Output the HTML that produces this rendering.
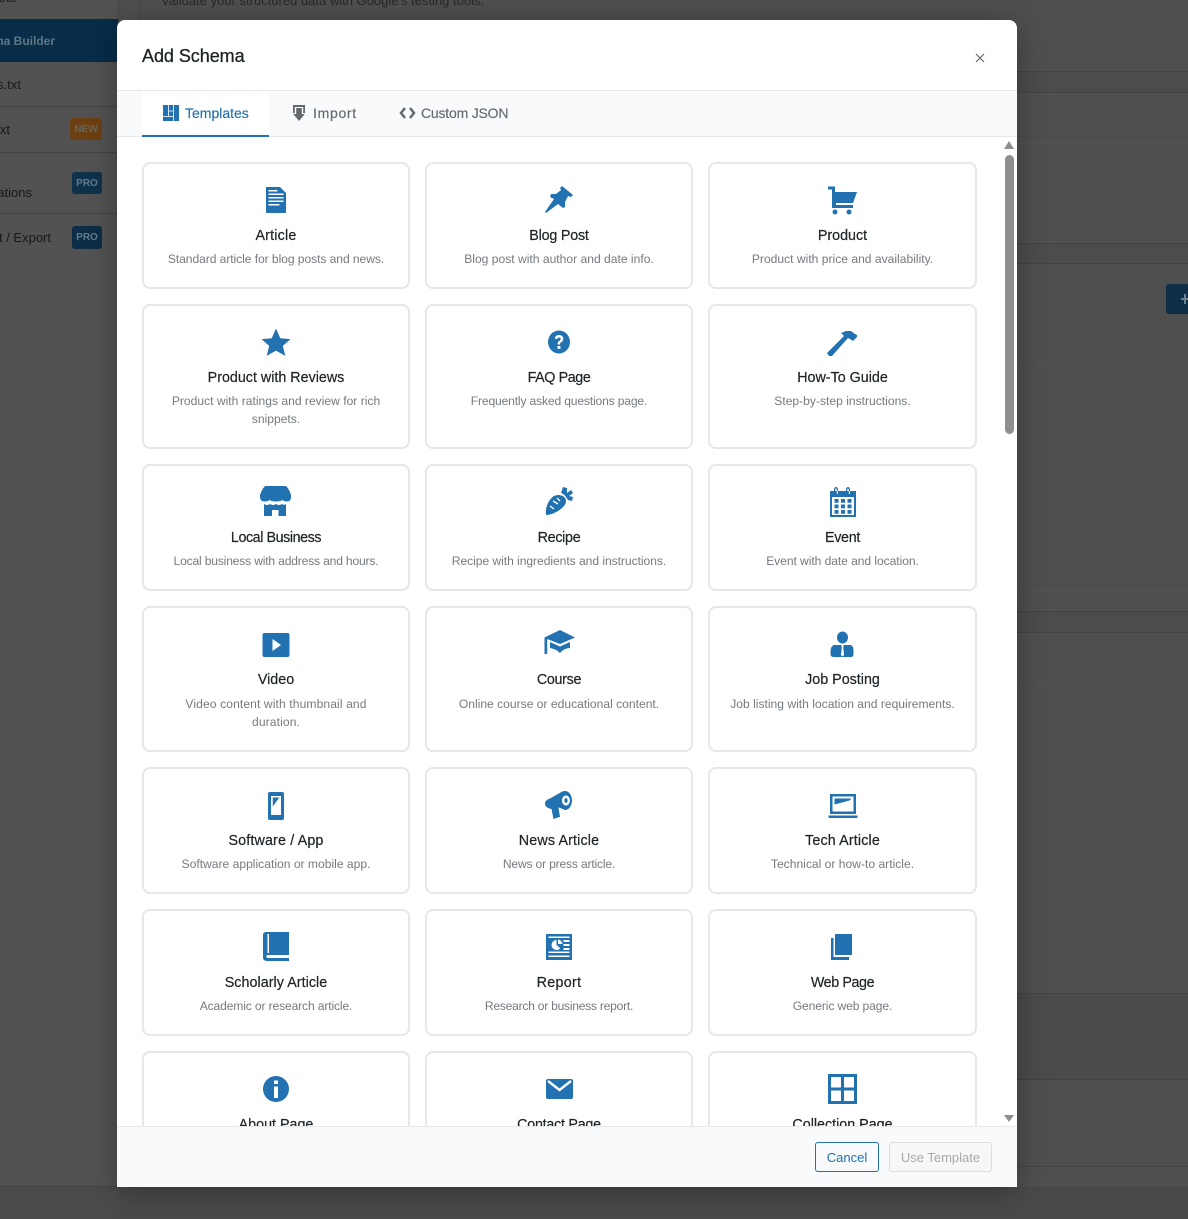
<!DOCTYPE html>
<html lang="en"><head><meta charset="utf-8"><title>Add Schema</title>
<style>
html,body{margin:0;padding:0;width:1188px;height:1219px;overflow:hidden;background:#5c5c5c;font-family:"Liberation Sans",sans-serif}
.a{position:absolute}
#bg{left:0;top:0;width:1188px;height:1219px;background:#666;overflow:hidden}
.l{position:absolute;height:1px;background:#565656}
.st{position:absolute;color:#202020;font-size:13px;white-space:nowrap;line-height:16px;right:1167px}
.bd{position:absolute;border-radius:3px;font-size:10px;font-weight:bold;text-align:center;line-height:23px}
#modal{left:117px;top:20px;width:900px;height:1167px;background:#fff;border-radius:8px 8px 0 0;box-shadow:0 4px 30px rgba(0,0,0,.3);overflow:hidden}
#title{left:25px;top:25px;font-size:18px;line-height:22px;color:#1d2327;-webkit-text-stroke:.3px #1d2327;white-space:nowrap;letter-spacing:-.05px}
#tabs{left:0;top:70px;width:900px;height:45px;background:#f8fafb;border-top:1px solid #e6e8ea;border-bottom:1px solid #e6e8ea}
#tab1{left:25px;top:0;width:127px;height:46px;background:#fff;box-sizing:border-box;border-bottom:2px solid #2271b1}
.tt{position:absolute;font-size:14px;line-height:18px;white-space:nowrap;color:#646970;top:13px;-webkit-text-stroke:.15px currentColor}
#body{left:0;top:117px;width:900px;height:989px;overflow:hidden}
.c{position:absolute;box-sizing:border-box;background:#fff;border:2px solid #e5e7ea;border-radius:8px;text-align:center}
.c svg{position:absolute;left:50%;margin-left:-16px;top:20px;width:32px;height:32px;fill:#2271b1}
.c b{position:absolute;left:0;right:0;top:63px;font-weight:normal;font-size:14.3px;line-height:18px;color:#1d2327;-webkit-text-stroke:.2px #1d2327}
.c p{position:absolute;left:20px;right:20px;top:86px;margin:0;font-size:12.1px;line-height:18px;color:#757a80}
#foot{left:0;top:1106px;width:900px;height:61px;background:#f8fafb;border-top:1px solid #e6e8ea}
.btn{position:absolute;top:15px;height:30px;box-sizing:border-box;border-radius:3px;font-size:13px;line-height:30px;text-align:center}
</style></head><body>
<div id="bg" class="a">
<div class="a" style="left:0;top:0;width:118px;height:1187px;background:#6a6a6a"></div>
<div class="a" style="left:118px;top:0;width:1px;height:1187px;background:#5a5a5a"></div>
<div class="a" style="left:0;top:1186px;width:118px;height:1px;background:#555"></div>
<div class="a" style="left:0;top:19px;width:118px;height:43px;background:#093a5e"></div>
<div class="st" style="right:1133px;top:33px;color:#7c98ab;font-weight:bold;font-size:12px">Schema Builder</div>
<div class="st" style="right:1172px;top:-10px;color:#222">Widgets</div>
<div class="st" style="top:77px">llms.txt</div>
<div class="st" style="right:1178px;top:122px">ads.txt</div>
<div class="st" style="right:1156px;top:185px">Integrations</div>
<div class="st" style="right:1137px;top:230px">Import / Export</div>
<div class="l" style="left:0;top:106px;width:118px"></div>
<div class="l" style="left:0;top:152px;width:118px"></div>
<div class="l" style="left:0;top:213px;width:118px"></div>
<div class="bd" style="left:70px;top:118px;width:32px;height:22px;background:#8a5218;color:#8a8074">NEW</div>
<div class="bd" style="left:72px;top:172px;width:30px;height:22px;background:#12405f;color:#7f9db4">PRO</div>
<div class="bd" style="left:72px;top:226px;width:30px;height:23px;background:#0f3a5a;color:#7f9db4">PRO</div>
<div class="a" style="left:139px;top:0;width:1px;height:20px;background:#5a5a5a"></div>
<div class="st" style="left:161px;right:auto;top:-7px;color:#333;font-size:13px">Validate your structured data with Google's testing tools.</div>
<div class="l" style="left:1017px;top:71px;width:171px"></div>
<div class="l" style="left:1017px;top:92px;width:171px"></div>
<div class="a" style="left:1017px;top:72px;width:171px;height:20px;background:#626262"></div>
<div class="a" style="left:1017px;top:143px;width:171px;height:1px;background:#6c6c6c"></div>
<div class="a" style="left:1017px;top:244px;width:171px;height:19px;background:#626262"></div>
<div class="l" style="left:1017px;top:243px;width:171px"></div>
<div class="l" style="left:1017px;top:263px;width:171px"></div>
<div class="a" style="left:1017px;top:364px;width:171px;height:1px;background:#6c6c6c"></div>
<div class="a" style="left:1166px;top:284px;width:30px;height:30px;background:#123a5a;border-radius:3px"></div>
<div class="a" style="left:1181px;top:298px;width:7px;height:2px;background:#8da3b5"></div>
<div class="a" style="left:1184px;top:294px;width:2px;height:10px;background:#8da3b5"></div>
<div class="a" style="left:1017px;top:590px;width:171px;height:1px;background:#6c6c6c"></div>
<div class="a" style="left:1017px;top:612px;width:171px;height:20px;background:#626262"></div>
<div class="l" style="left:1017px;top:611px;width:171px"></div>
<div class="l" style="left:1017px;top:632px;width:171px"></div>
<div class="a" style="left:1017px;top:683px;width:171px;height:1px;background:#6c6c6c"></div>
<div class="a" style="left:1017px;top:994px;width:171px;height:85px;background:#606060"></div>
<div class="l" style="left:1017px;top:993px;width:171px"></div>
<div class="l" style="left:1017px;top:1079px;width:171px"></div>
<div class="l" style="left:1017px;top:1166px;width:171px"></div>
<div class="a" style="left:119px;top:1187px;width:1069px;height:32px;background:#5e5e5e"></div>
<div class="a" style="left:0;top:1187px;width:119px;height:32px;background:#606060"></div>
<div class="a" style="left:0;top:0;width:1188px;height:1219px;background:rgba(0,0,0,.22)"></div>
</div>

<div id="modal" class="a">
<div id="title" class="a">Add Schema</div>
<svg class="a" style="left:858px;top:33px" width="10" height="10" viewBox="0 0 10 10"><path d="M1 1l8 8M9 1l-8 8" stroke="#646970" stroke-width="1.2" fill="none"/></svg>
<div id="tabs" class="a">
<div id="tab1" class="a"></div>
<svg class="a" style="left:46px;top:14px" width="16" height="16" viewBox="0 0 16 16"><rect width="16" height="16" fill="#2271b1"/><path d="M5.500 0v11M10.500 0v16M5.500 6h5M0 11.500h10.500" stroke="#fff" stroke-width=".8" fill="none"/></svg>
<div class="tt" style="left:68px;color:#2271b1">Templates</div>
<svg class="a" style="left:175px;top:13px" width="14" height="18" viewBox="0 0 14 18" fill="#646970"><path d="M1 1h12v8h-1.800V3H2.800v6H1zM4.200 4h5.600v6h3L7 17 1.200 10h3z"/></svg>
<div class="tt" style="left:196px;letter-spacing:.7px">Import</div>
<svg class="a" style="left:282px;top:15px" width="17" height="14" viewBox="0 0 17 14" fill="none" stroke="#646970" stroke-width="2.500"><path d="M6 2L2 7l4 5M11 2l4 5-4 5"/></svg>
<div class="tt" style="left:304px;letter-spacing:-.2px">Custom JSON</div>
</div>

<div id="body" class="a">

<div class="c" style="left:25px;top:25px;width:268px;height:127px"><svg viewBox="0 0 32 32"><path transform="translate(0,2)" fill-rule="evenodd" d="M6 1h14l6 6v20H6zM8.500 4v1.500h9V4zM8.500 7.500V9h15V7.500zM8.500 11v1.500h15V11zM8.500 14.500V16h15v-1.500zM8.500 18v1.500h11V18z"/></svg><b style="letter-spacing:.2px">Article</b><p style="letter-spacing:-.07px">Standard article for blog posts and news.</p></div>

<div class="c" style="left:308px;top:25px;width:268px;height:127px"><svg viewBox="0 0 32 32"><path d="M17 4l2-2 11 9-2 2-3-1-3 6v5l-2 1-5-4-12 9-1-1 9-13-4-2 1-3h5l5-4z"/></svg><b style="letter-spacing:-.2px">Blog Post</b><p>Blog post with author and date info.</p></div>

<div class="c" style="left:591px;top:25px;width:269px;height:127px"><svg viewBox="0 0 32 32"><path d="M1 2.500H8V8H30L26 19H9V21H26V24H5V5.500H1z"/><circle cx="8" cy="28" r="2.500"/><circle cx="22" cy="28" r="2.500"/></svg><b>Product</b><p>Product with price and availability.</p></div>

<div class="c" style="left:25px;top:167px;width:268px;height:145px"><svg viewBox="0 0 32 32"><path d="M16 2.500l4.300 9.700 10.200.9-7.700 6.800 2.500 10-9.300-5.300-9.300 5.300 2.500-10-7.700-6.800 10.200-.9z"/></svg><b>Product with Reviews</b><p>Product with ratings and review for rich snippets.</p></div>

<div class="c" style="left:308px;top:167px;width:268px;height:145px"><svg viewBox="0 0 32 32"><path fill-rule="evenodd" d="M16 4.500a11 11.500 0 1 1 0 23 11 11.500 0 0 1 0-23zM11.800 12.500l2.300.6c.3-1 1-1.500 1.900-1.500 1 0 1.700.6 1.700 1.400 0 .8-.5 1.200-1.300 1.800-1.300.9-1.800 1.800-1.800 3.200v.5h2.500v-.4c0-.9.300-1.300 1.100-1.900 1.300-.9 2.100-1.800 2.100-3.500 0-2.200-1.900-3.700-4.300-3.700-2.100 0-3.700 1.100-4.200 2.900zM14.500 20v2.800h2.900V20z"/></svg><b style="letter-spacing:-.4px">FAQ Page</b><p style="letter-spacing:-.16px">Frequently asked questions page.</p></div>

<div class="c" style="left:591px;top:167px;width:269px;height:145px"><svg viewBox="0 0 32 32"><path d="M0 27L17 10 14 7 19 5H24L28 8 30 9V11L26 15 23 13 21 12 5 30H2z"/></svg><b>How-To Guide</b><p>Step-by-step instructions.</p></div>

<div class="c" style="left:25px;top:327px;width:268px;height:127px"><svg viewBox="0 0 32 32"><path d="M5 0H26Q29 3 31 9V11Q31 15.500 27 15.500 24 15.500 22.500 14 20 15.500 16 15.500 12 15.500 9.500 14 8 15.500 5 15.500 0 15.500 0 11V9Q2 3 5 0z"/><path d="M4 18Q7 20 10 18 13 20 16 18 19 20 22 18 24 19.500 26 18V30H18.500V24H12V30H4z"/></svg><b style="letter-spacing:-.43px">Local Business</b><p style="letter-spacing:-.18px">Local business with address and hours.</p></div>

<div class="c" style="left:308px;top:327px;width:268px;height:127px"><svg viewBox="0 0 32 32"><path d="M3 29C2 22 5 14 11 10 15 8 20 9 22 12 24 15 23 18 20 21 15 26 8 29 3 29z"/><path d="M10 15l5 3M14 12l3 3M7 20l4 3" stroke="#fff" stroke-width="1.400" fill="none"/><path d="M18 7L20 1 24 2V7L28 4 30 7 26 10 30 11 29 15 25 14 23 11Q21 8 18 7z"/></svg><b style="letter-spacing:-.3px">Recipe</b><p style="letter-spacing:-.05px">Recipe with ingredients and instructions.</p></div>

<div class="c" style="left:591px;top:327px;width:269px;height:127px"><svg viewBox="0 0 32 32"><path fill-rule="evenodd" d="M3 5h4V3.500C7 2 8 1 9 1s2 1 2 2.500V8H9.800V3.500c0-1.200-1.600-1.200-1.600 0V5zM13 5h6V3.500c0-1.500 1-2.500 2-2.500s2 1 2 2.500V8h-1.200V3.500c0-1.200-1.600-1.200-1.600 0V5H13zM25 5h4v26H3V5zM5 11v18h22V11zM7.500 13h4v3.700h-4zM14 13h4v3.700h-4zM20.500 13h4v3.700h-4zM7.500 18.500h4v3.700h-4zM14 18.500h4v3.700h-4zM20.500 18.500h4v3.700h-4zM7.500 24h4v3.700h-4zM14 24h4v3.700h-4zM20.500 24h4v3.700h-4z"/></svg><b style="letter-spacing:-.3px">Event</b><p style="letter-spacing:-.07px">Event with date and location.</p></div>

<div class="c" style="left:25px;top:469px;width:268px;height:146px"><svg viewBox="0 0 32 32"><path fill-rule="evenodd" d="M4.500 5h23A2 2 0 0 1 29.500 7v20a2 2 0 0 1-2 2h-23a2 2 0 0 1-2-2V7a2 2 0 0 1 2-2zM12.500 11v12l8.500-6z"/></svg><b>Video</b><p style="top:87px;letter-spacing:.1px">Video content with thumbnail and duration.</p></div>

<div class="c" style="left:308px;top:469px;width:268px;height:146px"><svg viewBox="0 0 32 32"><path d="M17 2L32 9.500 17 16 4.200 11V26H1.500V9.500z"/><path d="M7 14L17 18.500 27 14V20Q21 20 17 25 13 21 7 20z"/></svg><b style="letter-spacing:-.3px">Course</b><p style="top:87px">Online course or educational content.</p></div>

<div class="c" style="left:591px;top:469px;width:269px;height:146px"><svg viewBox="0 0 32 32"><ellipse cx="15.500" cy="9.500" rx="5.500" ry="6"/><path fill-rule="evenodd" d="M7 17H24Q26.500 18 26.500 24V26Q26.500 29 24 29H7Q3.500 29 3.500 26V24Q3.500 18 7 17zM14.200 17l.6 2.200-.8 7.800 1.500 1.500 1.500-1.500-.8-7.800.6-2.200z"/></svg><b>Job Posting</b><p style="top:87px">Job listing with location and requirements.</p></div>

<div class="c" style="left:25px;top:630px;width:268px;height:127px"><svg viewBox="0 0 32 32"><path fill-rule="evenodd" d="M10 3h12a2 2 0 0 1 2 2v24a2 2 0 0 1-2 2H10a2 2 0 0 1-2-2V5a2 2 0 0 1 2-2zM11 7v19h10V7zM12.800 8.500h6.500l-6.500 9z"/></svg><b style="letter-spacing:.15px">Software / App</b><p>Software application or mobile app.</p></div>

<div class="c" style="left:308px;top:630px;width:268px;height:127px"><svg viewBox="0 0 32 32"><path fill-rule="evenodd" d="M22 2c3.800 0 7 4 7 9.500S25.800 21 22 21l-6-2.500-.5.2 1.500 9L10.500 30 8.500 20C5.500 19.500 2 18 2 14.500 2 12 4 10.500 7 9.500L18 3.200C19 2.500 20.500 2 22 2zM23 6.500c-2.200 0-4 2.200-4 5s1.800 5 4 5 3.900-2.200 3.900-5-1.700-5-3.900-5zM23 9c1 0 1.600 1.200 1.600 2.500S24 14 23 14s-1.600-1.200-1.600-2.500S22 9 23 9z"/></svg><b style="letter-spacing:.15px">News Article</b><p style="letter-spacing:-.18px">News or press article.</p></div>

<div class="c" style="left:591px;top:630px;width:269px;height:127px"><svg viewBox="0 0 32 32"><path fill-rule="evenodd" d="M3 5h26v20H3zM5.500 7.500v15h21v-15zM7.500 9.500h17l-2 2-15 4zM1.500 26.500h29V28c0 .7-.5 1-1 1h-27c-.5 0-1-.3-1-1z"/></svg><b style="letter-spacing:.15px">Tech Article</b><p>Technical or how-to article.</p></div>

<div class="c" style="left:25px;top:772px;width:268px;height:127px"><svg viewBox="0 0 32 32"><path transform="translate(-1,0)" fill-rule="evenodd" d="M7 1h23v23H8.500c-1.500 0-1.500 3 0 3H30v3H8c-2.500 0-4-1.500-4-4V4c0-2 1.500-3 3-3zM8.500 3v19h1.500V3z"/></svg><b style="letter-spacing:.05px">Scholarly Article</b><p style="letter-spacing:-.14px">Academic or research article.</p></div>

<div class="c" style="left:308px;top:772px;width:268px;height:127px"><svg viewBox="0 0 32 32"><path fill-rule="evenodd" d="M3 3h26v26H3zM5.500 5.500v1.500h21V5.500zM5.500 24.500V26h21v-1.500zM5.500 20.500V22h21v-1.500zM13.500 9a5 5 0 1 0 3.800 8.300l-3.800-3.300zM15 8.500V13h4.500a5 5 0 0 0-4.500-4.500zM20.500 9v2h6V9zM20.500 13v2h6v-2zM20.500 17v2h6v-2z"/></svg><b style="letter-spacing:.3px">Report</b><p style="letter-spacing:-.25px">Research or business report.</p></div>

<div class="c" style="left:591px;top:772px;width:269px;height:127px"><svg viewBox="0 0 32 32"><path d="M8 3H25V24H8z"/><path d="M6.500 7H4V29H22V26H6.500z"/></svg><b style="letter-spacing:-.4px">Web Page</b><p style="letter-spacing:-.12px">Generic web page.</p></div>

<div class="c" style="left:25px;top:914px;width:268px;height:127px"><svg viewBox="0 0 32 32"><path fill-rule="evenodd" d="M16 3a13 13 0 1 1 0 26 13 13 0 0 1 0-26zM14 7.500v3.500h4V7.500zM14 13.500V25h4V13.500z"/></svg><b>About Page</b><p>About page.</p></div>

<div class="c" style="left:308px;top:914px;width:268px;height:127px"><svg viewBox="0 0 32 32"><rect x="3" y="6" width="27" height="20" rx="2"/><path d="M5 8l11.500 9L28 8" stroke="#fff" stroke-width="2.400" fill="none"/></svg><b style="letter-spacing:-.25px">Contact Page</b><p>Contact page.</p></div>

<div class="c" style="left:591px;top:914px;width:269px;height:127px"><svg viewBox="0 0 32 32"><path fill-rule="evenodd" d="M1 1h29v30H1zM4 4v10.500h10V4zM17 4v10.500h10V4zM4 17.500V28h10V17.500zM17 17.500V28h10V17.500z"/></svg><b>Collection Page</b><p>Collection page.</p></div>

<div class="a" style="left:887px;top:4px;width:0;height:0;border-left:5px solid transparent;border-right:5px solid transparent;border-bottom:8px solid #8f8f8f"></div>
<div class="a" style="left:888px;top:18px;width:9px;height:279px;background:#8f8f8f;border-radius:4.500px"></div>
<div class="a" style="left:887px;top:978px;width:0;height:0;border-left:5px solid transparent;border-right:5px solid transparent;border-top:7px solid #8f8f8f"></div>
</div>

<div id="foot" class="a">
<div class="btn" style="left:698px;width:64px;border:1px solid #2271b1;color:#2271b1;background:#f8fafb">Cancel</div>
<div class="btn" style="left:772px;width:103px;border:1px solid #dcdcde;color:#a7aaad;background:#f6f7f7">Use Template</div>
</div>
</div>
</body></html>
